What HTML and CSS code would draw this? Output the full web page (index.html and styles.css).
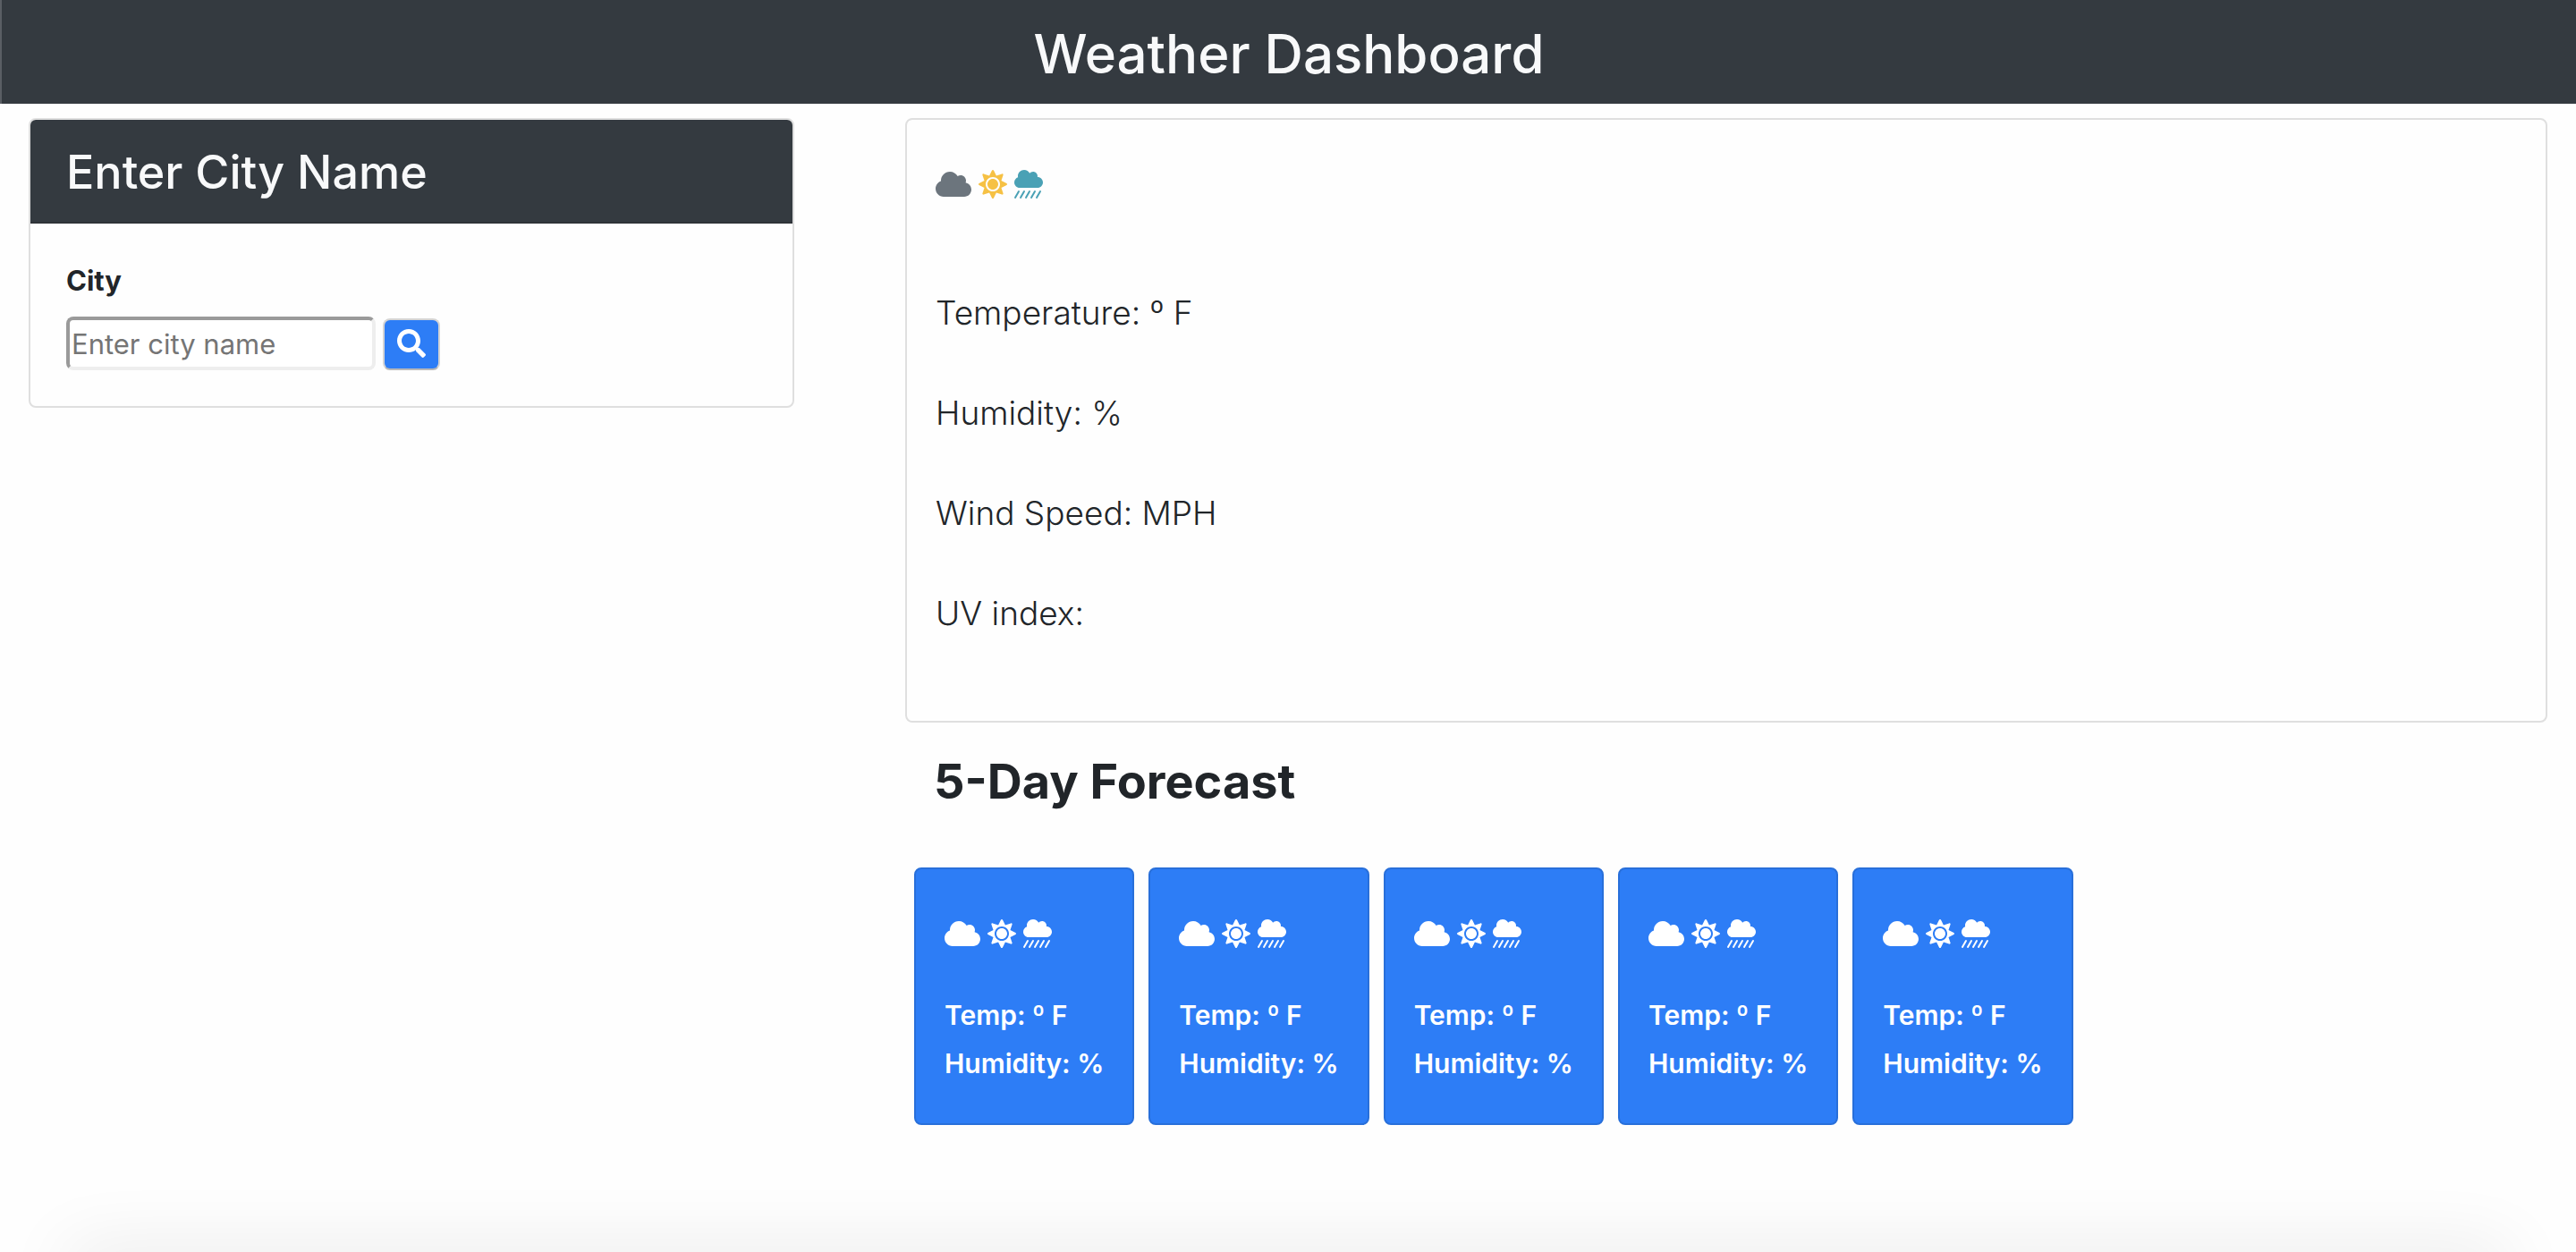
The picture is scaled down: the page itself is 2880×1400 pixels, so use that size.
FILE: index.html
```html
<!DOCTYPE html>
<html lang="en">
<head>
  <meta charset="utf-8">
  <meta name="viewport" content="width=device-width, initial-scale=1">
  <title>Weather Dashboard</title>
  <link rel="stylesheet" href="styles.css">
</head>
<body>
  <svg class="sprite" aria-hidden="true">
    <symbol id="cloud" viewBox="0 0 640 512"><path d="M537.6 226.6c4.1-10.7 6.4-22.4 6.4-34.6 0-53-43-96-96-96-19.7 0-38.1 6-53.3 16.2C367 64.2 315.3 32 256 32c-88.4 0-160 71.6-160 160 0 2.7.1 5.4.2 8.1C40.2 219.8 0 273.2 0 336c0 79.5 64.5 144 144 144h368c70.7 0 128-57.3 128-128 0-61.9-44-113.6-102.4-125.4z"/></symbol>
    <symbol id="sun" viewBox="0 0 512 512"><path d="M256 160c-52.9 0-96 43.1-96 96s43.1 96 96 96 96-43.1 96-96-43.1-96-96-96zm246.4 80.5l-94.7-47.3 33.5-100.4c4.5-13.6-8.4-26.5-21.9-21.9l-100.4 33.5-47.4-94.8c-6.4-12.8-24.6-12.8-31 0l-47.3 94.7L92.7 70.8c-13.6-4.5-26.5 8.4-21.9 21.9l33.5 100.4-94.7 47.4c-12.8 6.4-12.8 24.6 0 31l94.7 47.3-33.5 100.5c-4.5 13.6 8.4 26.5 21.9 21.9l100.4-33.5 47.3 94.7c6.4 12.8 24.6 12.8 31 0l47.3-94.7 100.4 33.5c13.6 4.5 26.5-8.4 21.9-21.9l-33.5-100.4 94.7-47.3c13-6.5 13-24.7.2-31.1zm-155.9 106c-49.9 49.9-131.1 49.9-181 0-49.9-49.9-49.9-131.1 0-181 49.9-49.9 131.1-49.9 181 0 49.9 49.9 49.9 131.1 0 181z"/></symbol>
    <symbol id="rain" viewBox="0 0 512 512"><path id="drop" d="M183.9 370.1c-7.6-4.4-17.4-1.8-21.8 6l-64 112c-4.4 7.7-1.7 17.5 6 21.8 2.5 1.4 5.2 2.1 7.9 2.1 5.5 0 10.9-2.9 13.9-8.1l64-112c4.4-7.6 1.7-17.4-6-21.8z"/><use href="#drop" x="-96"/><use href="#drop" x="96"/><use href="#drop" x="192"/><use href="#drop" x="288"/><path d="M416 128c-.6 0-1.1.2-1.6.2 1.1-5.2 1.6-10.6 1.6-16.2 0-44.2-35.8-80-80-80-24.6 0-46.3 11.3-61 28.8C256.4 24.8 219.3 0 176 0 114.1 0 64 50.1 64 112c0 7.3.8 14.3 2.1 21.2C27.8 145.8 0 181.5 0 224c0 53 43 96 96 96h320c53 0 96-43 96-96s-43-96-96-96z"/></symbol>
    <symbol id="search" viewBox="0 0 512 512"><path d="M505 442.7L405.3 343c-4.5-4.5-10.6-7-17-7H372c27.6-35.3 44-79.7 44-128C416 93.1 322.9 0 208 0S0 93.1 0 208s93.1 208 208 208c48.3 0 92.7-16.4 128-44v16.3c0 6.4 2.5 12.5 7 17l99.7 99.7c9.4 9.4 24.6 9.4 33.9 0l28.3-28.3c9.4-9.4 9.4-24.6.1-34zM208 336c-70.7 0-128-57.2-128-128 0-70.7 57.2-128 128-128 70.7 0 128 57.2 128 128 0 70.7-57.2 128-128 128z"/></symbol>
  </svg>

  <header class="banner">
    <h1 class="banner-title">Weather Dashboard</h1>
  </header>

  <main class="layout">
    <section class="card search-card">
      <h2 class="card-header">Enter City Name</h2>
      <form class="search-form">
        <label class="search-label" for="city">City</label>
        <div class="search-row">
          <input class="search-input" id="city" type="text" placeholder="Enter city name">
          <button class="search-button" type="button" aria-label="Search"><svg class="icon"><use href="#search"/></svg></button>
        </div>
      </form>
    </section>

    <div class="results">
      <section class="card current">
        <div class="icons">
          <svg class="icon icon-wide gray"><use href="#cloud"/></svg>
          <svg class="icon yellow"><use href="#sun"/></svg>
          <svg class="icon teal"><use href="#rain"/></svg>
        </div>
        <div class="readings">
          <p>Temperature: º F</p>
          <p>Humidity: %</p>
          <p>Wind Speed: MPH</p>
          <p>UV index:</p>
        </div>
      </section>

      <h2 class="forecast-title">5-Day Forecast</h2>
      <div class="forecast">
        <article class="day">
          <div class="icons"><svg class="icon icon-wide"><use href="#cloud"/></svg><svg class="icon"><use href="#sun"/></svg><svg class="icon"><use href="#rain"/></svg></div>
          <p>Temp: º F</p>
          <p>Humidity: %</p>
        </article>
        <article class="day">
          <div class="icons"><svg class="icon icon-wide"><use href="#cloud"/></svg><svg class="icon"><use href="#sun"/></svg><svg class="icon"><use href="#rain"/></svg></div>
          <p>Temp: º F</p>
          <p>Humidity: %</p>
        </article>
        <article class="day">
          <div class="icons"><svg class="icon icon-wide"><use href="#cloud"/></svg><svg class="icon"><use href="#sun"/></svg><svg class="icon"><use href="#rain"/></svg></div>
          <p>Temp: º F</p>
          <p>Humidity: %</p>
        </article>
        <article class="day">
          <div class="icons"><svg class="icon icon-wide"><use href="#cloud"/></svg><svg class="icon"><use href="#sun"/></svg><svg class="icon"><use href="#rain"/></svg></div>
          <p>Temp: º F</p>
          <p>Humidity: %</p>
        </article>
        <article class="day">
          <div class="icons"><svg class="icon icon-wide"><use href="#cloud"/></svg><svg class="icon"><use href="#sun"/></svg><svg class="icon"><use href="#rain"/></svg></div>
          <p>Temp: º F</p>
          <p>Humidity: %</p>
        </article>
      </div>
    </div>
  </main>
  <div class="bottom-shade"></div>
</body>
</html>
```
FILE: styles.css
```css
* {
  box-sizing: border-box;
}

body {
  margin: 0;
  color: #212529;
  background: #fefefe;
  font-family: Inter, "Liberation Sans", sans-serif;
  font-size: 31px;
  line-height: 48px;
}

h1,
h2,
p {
  margin: 0;
}

.sprite {
  position: absolute;
  width: 0;
  height: 0;
}

.icon {
  display: block;
  width: 32px;
  height: 32px;
  fill: currentColor;
}

.icon-wide {
  width: 40px;
}

.icons {
  display: flex;
  gap: 8px;
}

.gray { color: #6c757d; }
.yellow { color: #f6c144; }
.teal { color: #4aa1b5; }

.banner {
  padding: 22px 32px 18px;
  border-left: 2px solid #5a5e64;
  background: #343a40;
  color: #f8f9fa;
  text-align: center;
}

.banner-title {
  font-size: 60px;
  font-weight: 500;
  line-height: 76px;
}

.layout {
  display: grid;
  grid-template-columns: 856fr 1836fr;
  gap: 124px;
  align-items: start;
  padding: 16px 32px;
}

.card {
  border: 2px solid #dfdfdf;
  border-radius: 8px;
  background: #fefefe;
}

.card-header {
  padding: 26px 40px 22px;
  border-bottom: 2px solid #2f3338;
  border-radius: 6px 6px 0 0;
  background: #343a40;
  color: #f8f9fa;
  font-size: 52px;
  font-weight: 500;
  line-height: 66px;
}

.search-form {
  padding: 40px;
}

.search-label {
  display: block;
  margin-bottom: 16px;
  font-weight: 700;
}

.search-row {
  display: flex;
  align-items: flex-end;
  gap: 8px;
}

.search-input {
  width: 346px;
  height: 60px;
  padding: 2px;
  border: 4px solid;
  border-color: #9a9a9a #eee #eee #9a9a9a;
  border-radius: 8px;
  background: #fff;
  color: #212529;
  font: inherit;
}

.search-input::placeholder {
  color: #757575;
}

.search-button {
  display: grid;
  place-items: center;
  width: 64px;
  height: 58px;
  padding: 0 0 2px;
  border: 2px solid;
  border-color: #d4d4d4 #d4d4d4 #b8b8b8;
  border-radius: 8px;
  background: #2d7df6;
  color: #fff;
}

.current {
  padding: 56px 32px 90px;
}

.readings {
  display: grid;
  gap: 52px;
  margin-top: 98px;
  font-size: 37px;
  font-weight: 300;
  line-height: 60px;
}

.forecast-title {
  padding: 32px 32px 62px;
  font-size: 54px;
  font-weight: 700;
  line-height: 68px;
}

.forecast {
  display: flex;
  flex-wrap: wrap;
  gap: 16px;
  padding-left: 10px;
}

.day {
  min-width: 246px;
  padding: 56px 32px 40px;
  border: 2px solid #286fda;
  border-radius: 8px;
  background: #2d7df6;
  color: #fff;
  font-size: 30px;
  font-weight: 600;
  line-height: 54px;
}

.day .icons {
  margin-bottom: 48px;
}

/* Soft shade rising from the bottom edge of the window */
.bottom-shade {
  position: fixed;
  right: 76px;
  bottom: -40px;
  left: 76px;
  height: 40px;
  box-shadow: 0 0 80px rgba(0, 0, 0, 0.11);
}
```
